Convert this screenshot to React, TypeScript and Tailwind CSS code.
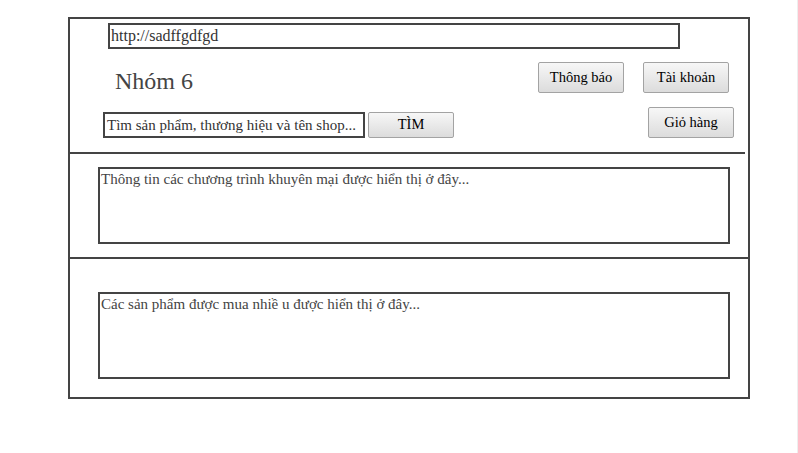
export default function App() {
  const btn =
    "shrink-0 flex items-center justify-center w-[86px] h-[31px] border border-[#a3a3a3] rounded-[2px] bg-gradient-to-b from-[#f7f7f7] to-[#dcdcdc] text-[14.5px] text-black font-['Liberation_Serif','DejaVu_Serif',serif]";

  return (
    <div className="w-[798px] h-[453px] bg-white border-r border-[#eeeeee] pl-[68px] pt-[17px] font-['Liberation_Serif','DejaVu_Serif',serif]">
      <div className="w-[682px] h-[382px] border-2 border-[#444]">
        {/* header */}
        <div className="w-[675px] border-b-2 border-[#444] pt-[4px] pb-[14px]">
          <div className="ml-[38px] w-[572px] h-[26px] border-2 border-[#444] pl-[1px] text-[16px] leading-[21px] text-[#333]">
            http://sadffgdfgd
          </div>
          <div className="mt-[13px] h-[31px] flex items-center">
            <div className="ml-[45px] pt-[6px] w-[423px] shrink-0 whitespace-nowrap text-[24px] text-[#444] leading-none">
              Nhóm 6
            </div>
            <button className={btn}>Thông báo</button>
            <button className={btn + " ml-[19px]"}>Tài khoản</button>
          </div>
          <div className="mt-[14px] h-[31px] flex items-end">
            <div className="ml-[33px] w-[262px] h-[26px] shrink-0 border-2 border-[#444] pl-[2px] text-[15px] leading-[22px] text-[#333] whitespace-nowrap overflow-hidden">
              Tìm sản phẩm, thương hiệu và tên shop...
            </div>
            <button className={btn + " ml-[3px] !h-[26px]"}>TÌM</button>
            <button className={btn + " ml-[194px]"}>Giỏ hàng</button>
          </div>
        </div>

        {/* promotions */}
        <div className="h-[105px] border-b-2 border-[#444] pt-[13px]">
          <div className="ml-[28px] w-[632px] h-[77px] border-2 border-[#444] pl-[1px] text-[15px] leading-[21px] text-[#444]">
            Thông tin các chương trình khuyên mại được hiển thị ở đây...
          </div>
        </div>

        {/* best sellers */}
        <div className="pt-[33px]">
          <div className="ml-[28px] w-[632px] h-[87px] border-2 border-[#444] pl-[1px] text-[15px] leading-[21px] text-[#444]">
            Các sản phẩm được mua nhiề u được hiển thị ở đây...
          </div>
        </div>
      </div>
    </div>
  );
}
